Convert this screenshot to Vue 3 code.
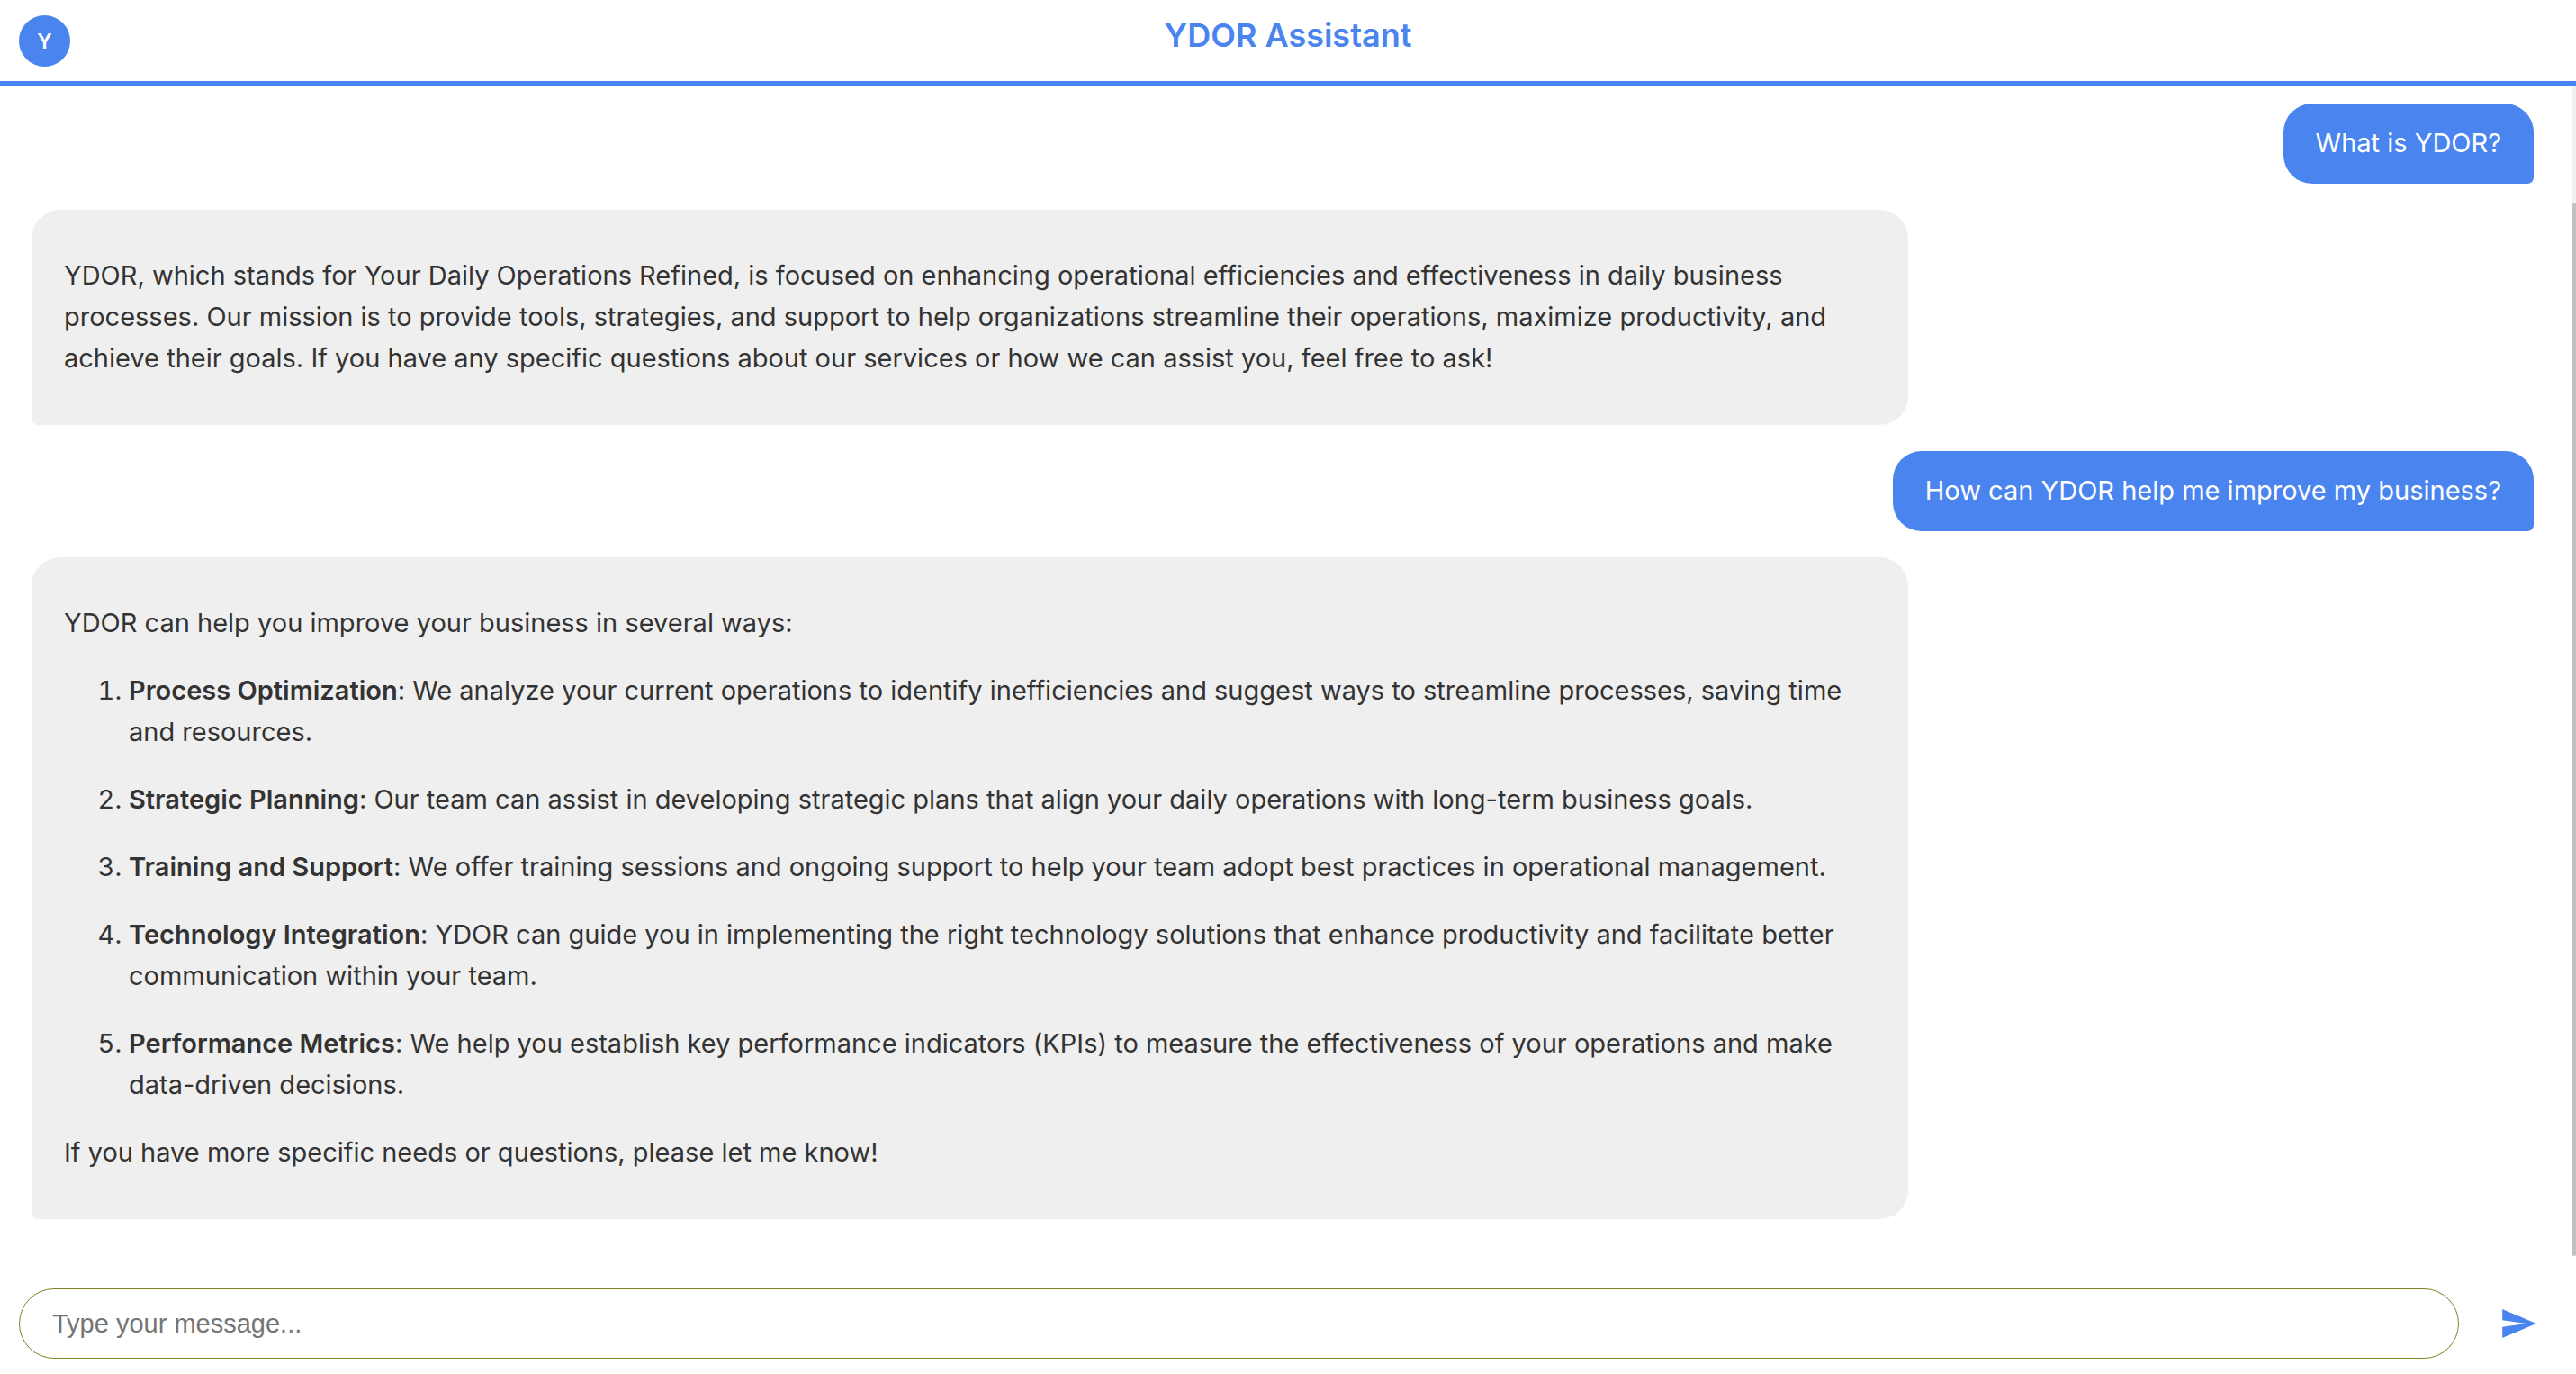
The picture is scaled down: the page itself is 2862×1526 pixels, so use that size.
<script setup>
import { ref } from 'vue'

const draft = ref('')

const messages = [
  { from: 'user', text: 'What is YDOR?' },
  {
    from: 'bot',
    text: 'YDOR, which stands for Your Daily Operations Refined, is focused on enhancing operational efficiencies and effectiveness in daily business processes. Our mission is to provide tools, strategies, and support to help organizations streamline their operations, maximize productivity, and achieve their goals. If you have any specific questions about our services or how we can assist you, feel free to ask!',
  },
  { from: 'user', text: 'How can YDOR help me improve my business?' },
  {
    from: 'bot',
    text: 'YDOR can help you improve your business in several ways:',
    items: [
      { title: 'Process Optimization', body: 'We analyze your current operations to identify inefficiencies and suggest ways to streamline processes, saving time and resources.' },
      { title: 'Strategic Planning', body: 'Our team can assist in developing strategic plans that align your daily operations with long-term business goals.' },
      { title: 'Training and Support', body: 'We offer training sessions and ongoing support to help your team adopt best practices in operational management.' },
      { title: 'Technology Integration', body: 'YDOR can guide you in implementing the right technology solutions that enhance productivity and facilitate better communication within your team.' },
      { title: 'Performance Metrics', body: 'We help you establish key performance indicators (KPIs) to measure the effectiveness of your operations and make data-driven decisions.' },
    ],
    closing: 'If you have more specific needs or questions, please let me know!',
  },
]
</script>

<template>
  <div class="app">
    <header class="header">
      <div class="avatar">Y</div>
      <h1 class="title">YDOR Assistant</h1>
    </header>

    <div class="chat">
      <main class="messages">
        <div v-for="(m, i) in messages" :key="i" class="bubble" :class="m.from">
          <template v-if="m.from === 'user'">{{ m.text }}</template>
          <template v-else>
            <p>{{ m.text }}</p>
            <ol v-if="m.items">
              <li v-for="item in m.items" :key="item.title">
                <strong>{{ item.title }}</strong>: {{ item.body }}
              </li>
            </ol>
            <p v-if="m.closing">{{ m.closing }}</p>
          </template>
        </div>
      </main>
      <div class="track" aria-hidden="true"><div class="thumb"></div></div>
    </div>

    <form class="composer" @submit.prevent="draft = ''">
      <input v-model="draft" class="field" type="text" placeholder="Type your message..." aria-label="Message" />
      <button class="send" type="submit" aria-label="Send">
        <svg viewBox="0 0 114 97" width="38" height="32" aria-hidden="true">
          <path d="M0 0 114 48.500 0 97V60L81 48.500 0 37Z" fill="currentColor" />
        </svg>
      </button>
    </form>
  </div>
</template>

<style>
body {
  margin: 0;
  background: #fff;
}
</style>

<style scoped>
.app {
  display: flex;
  flex-direction: column;
  height: 100vh;
  font-family: Inter, "Liberation Sans", sans-serif;
  font-size: 29px;
  line-height: 46px;
  font-variant-ligatures: no-contextual;
  color: #333;
}

.header {
  display: grid;
  grid-template-columns: 1fr auto 1fr;
  align-items: start;
  padding: 17px 21px 16px;
  border-bottom: 5px solid #4a84ee;
}

.avatar {
  display: flex;
  align-items: center;
  justify-content: center;
  width: 57px;
  height: 57px;
  border-radius: 50%;
  background: #4a84ee;
  color: #fff;
  font-size: 23px;
  font-weight: 600;
}

.title {
  margin: 0;
  color: #4a84ee;
  font-size: 36px;
  line-height: 44px;
  font-weight: 600;
}

.chat {
  display: flex;
  flex: 1;
  min-height: 0;
}

.messages {
  display: flex;
  flex: 1;
  flex-direction: column;
  align-items: flex-start;
  gap: 29px;
  min-width: 0;
  padding: 20px 43px 0 35px;
  overflow: hidden;
}

.bubble {
  box-sizing: border-box;
  max-width: 75%;
  padding: 21px 36px 22px;
  border-radius: 32px;
}

.user {
  align-self: flex-end;
  border-bottom-right-radius: 7px;
  background: #4a84ee;
  color: #fff;
}

.bot {
  border-bottom-left-radius: 7px;
  background: #efefef;
}

.bot p,
.bot ol,
.bot li {
  margin: 29px 0;
}

.bot ol {
  padding-left: 72px;
}

.bot strong {
  font-weight: 600;
}

.track {
  display: flex;
  flex-direction: column;
  justify-content: flex-end;
  width: 4px;
  background: #f1f1f1;
}

.thumb {
  height: 90%;
  border-radius: 4px;
  background: #c1c1c1;
}

.composer {
  display: flex;
  align-items: center;
  gap: 48px;
  padding: 36px 44px 17px 21px;
}

.field {
  box-sizing: border-box;
  flex: 1;
  min-width: 0;
  height: 78px;
  padding: 0 36px;
  border: 1px solid #808020;
  border-radius: 39px;
  outline: none;
  background: #fff;
  color: #333;
  font-family: "Liberation Sans", Arial, sans-serif;
  font-size: 29px;
}

.field::placeholder {
  color: #757575;
}

.send {
  display: flex;
  padding: 0;
  border: 0;
  background: none;
  color: #4a84ee;
  cursor: pointer;
}
</style>
